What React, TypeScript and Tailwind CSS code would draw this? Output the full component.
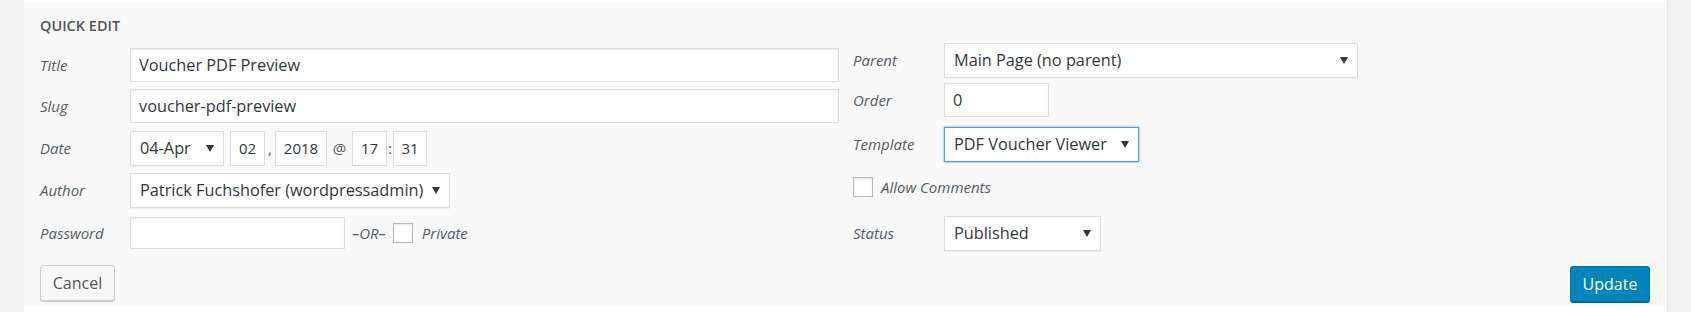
import React from "react";

const font = { fontFamily: '"Open Sans", "Noto Sans", "Liberation Sans", sans-serif' };

function Arrow() {
  return (
    <svg width="8" height="7" viewBox="0 0 8 7" className="shrink-0">
      <polygon points="0,0 8,0 4,7" fill="#32373c" />
    </svg>
  );
}

function Label({ children, w }: { children: React.ReactNode; w: string }) {
  return <span className={`${w} shrink-0 italic text-[15px] text-[#555d66]`}>{children}</span>;
}

export default function App() {
  return (
    <div className="w-[1691px] h-[312px] bg-[#f1f1f1] overflow-hidden text-[#32373c]" style={font}>
      <div className="ml-[24px] w-[1644px] h-[312px] bg-white pt-[3px] border-r border-[#e5e5e5]">
        <div className="h-[304px] bg-[#f9f9f9] pl-[16px] pr-[16px] flex">
          {/* Left column */}
          <div className="w-[799px] shrink-0 flex flex-col">
            <div className="h-[45px] pt-[13px] text-[14.5px] font-semibold uppercase text-[#555] leading-[20px]">Quick Edit</div>
            <div className="flex items-center h-[34px]">
              <Label w="w-[90px]">Title</Label>
              <div className="w-[709px] h-[34px] bg-white border border-[#ddd] shadow-[inset_0_1px_2px_rgba(0,0,0,0.07)] flex items-center pl-[8px] text-[16.3px]">
                Voucher PDF Preview
              </div>
            </div>
            <div className="flex items-center h-[34px] mt-[7px]">
              <Label w="w-[90px]">Slug</Label>
              <div className="w-[709px] h-[34px] bg-white border border-[#ddd] shadow-[inset_0_1px_2px_rgba(0,0,0,0.07)] flex items-center pl-[8px] text-[16.3px]">
                voucher-pdf-preview
              </div>
            </div>
            <div className="flex items-center h-[35px] mt-[8px]">
              <Label w="w-[90px]">Date</Label>
              <div className="w-[94px] h-[35px] bg-white border border-[#ddd] shadow-[0_1px_1px_rgba(0,0,0,0.04)] flex items-center justify-between pl-[9px] pr-[9px] text-[16.3px]">
                <span>04-Apr</span>
                <Arrow />
              </div>
              <div className="ml-[6px] w-[35px] h-[35px] bg-white border border-[#ddd] flex items-center justify-center text-[15px]">02</div>
              <span className="w-[10px] text-center text-[15px] text-[#555]">,</span>
              <div className="w-[52px] h-[35px] bg-white border border-[#ddd] flex items-center justify-center text-[15px]">2018</div>
              <span className="w-[25px] text-center text-[15px] text-[#555]">@</span>
              <div className="w-[35px] h-[35px] bg-white border border-[#ddd] flex items-center justify-center text-[15px]">17</div>
              <span className="w-[6px] text-center text-[15px] text-[#555]">:</span>
              <div className="w-[34px] h-[35px] bg-white border border-[#ddd] flex items-center justify-center text-[15px]">31</div>
            </div>
            <div className="flex items-center h-[35px] mt-[7px]">
              <Label w="w-[90px]">Author</Label>
              <div className="w-[320px] h-[35px] bg-white border border-[#ddd] shadow-[0_1px_1px_rgba(0,0,0,0.04)] flex items-center justify-between pl-[9px] pr-[9px] text-[16.3px]">
                <span>Patrick Fuchshofer (wordpressadmin)</span>
                <Arrow />
              </div>
            </div>
            <div className="flex items-center h-[32px] mt-[9px]">
              <Label w="w-[90px]">Password</Label>
              <div className="w-[215px] h-[32px] bg-white border border-[#ddd] shadow-[inset_0_1px_2px_rgba(0,0,0,0.07)]" />
              <span className="ml-[7px] italic text-[15px] text-[#555d66]">–OR–</span>
              <div className="ml-[7px] w-[20px] h-[20px] bg-white border border-[#b4b9be] shadow-[inset_0_1px_2px_rgba(0,0,0,0.1)]" />
              <span className="ml-[9px] italic text-[15px] text-[#555d66]">Private</span>
            </div>
            <div className="flex items-center h-[36px] mt-[16px]">
              <button className="w-[75px] h-[36px] bg-[#f7f7f7] border border-[#ccc] rounded-[3px] shadow-[0_1px_0_#ccc] text-[16px] text-[#555] leading-none">
                Cancel
              </button>
            </div>
          </div>
          {/* Right column */}
          <div className="flex-1 ml-[14px] flex flex-col">
            <div className="flex items-center h-[35px] mt-[40px]">
              <Label w="w-[91px]">Parent</Label>
              <div className="w-[414px] h-[35px] bg-white border border-[#ddd] shadow-[0_1px_1px_rgba(0,0,0,0.04)] flex items-center justify-between pl-[9px] pr-[9px] text-[16.3px]">
                <span>Main Page (no parent)</span>
                <Arrow />
              </div>
            </div>
            <div className="flex items-center h-[34px] mt-[5px]">
              <Label w="w-[91px]">Order</Label>
              <div className="w-[105px] h-[34px] bg-white border border-[#ddd] shadow-[inset_0_1px_2px_rgba(0,0,0,0.07)] flex items-center pl-[8px] text-[16.3px]">
                0
              </div>
            </div>
            <div className="flex items-center h-[35px] mt-[10px]">
              <Label w="w-[91px]">Template</Label>
              <div className="w-[195px] h-[35px] bg-white border border-[#5b9dd9] shadow-[0_0_2px_rgba(30,140,190,0.8)] flex items-center justify-between pl-[9px] pr-[9px] text-[16.3px]">
                <span>PDF Voucher Viewer</span>
                <Arrow />
              </div>
            </div>
            <div className="flex items-center h-[20px] mt-[15px]">
              <div className="w-[20px] h-[20px] bg-white border border-[#b4b9be] shadow-[inset_0_1px_2px_rgba(0,0,0,0.1)]" />
              <span className="ml-[8px] italic text-[15px] text-[#555d66]">Allow Comments</span>
            </div>
            <div className="flex items-center h-[35px] mt-[19px]">
              <Label w="w-[91px]">Status</Label>
              <div className="w-[157px] h-[35px] bg-white border border-[#ddd] shadow-[0_1px_1px_rgba(0,0,0,0.04)] flex items-center justify-between pl-[9px] pr-[9px] text-[16.3px]">
                <span>Published</span>
                <Arrow />
              </div>
            </div>
            <div className="flex justify-end h-[36px] mt-[15px] pr-[1px]">
              <button className="w-[80px] h-[36px] bg-[#0085ba] border border-[#0073aa] rounded-[3px] shadow-[0_1px_0_#006799] text-[16px] text-white leading-none">
                Update
              </button>
            </div>
          </div>
        </div>
      </div>
    </div>
  );
}
